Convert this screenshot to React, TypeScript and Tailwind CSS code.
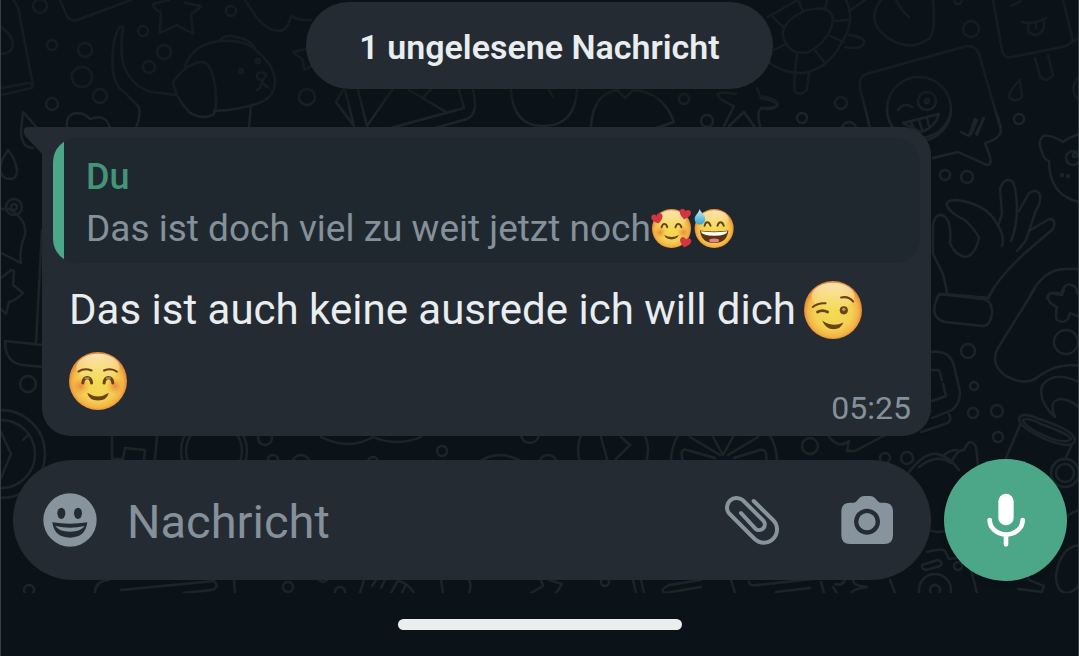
import type { ReactNode } from 'react';

// x, y, radius of the small bubbles in the wallpaper
const bubbles = [
  [39, 6, 7], [51, 45, 5], [84, 50, 7], [81, 77, 10], [99, 96, 7], [51, 104, 6],
  [142, 31, 5], [163, 52, 7], [148, 67, 6], [230, 11, 5], [306, 97, 8], [240, 71, 2],
  [257, 61, 2], [970, 29, 8], [957, 0, 4], [918, 109, 32], [926, 101, 9], [926, 101, 2],
  [1018, 119, 5], [840, 103, 6], [801, 118, 5], [848, 129, 7], [944, 175, 5], [966, 177, 6],
  [1072, 158, 7], [1074, 155, 2], [1061, 175, 1], [1067, 176, 1],
  [1065, 342, 12], [967, 351, 7], [973, 386, 4], [972, 413, 5], [996, 411, 6], [997, 437, 5],
  [13, 207, 8], [13, 207, 3], [27, 384, 8], [0, 454, 44], [0, 454, 34], [213, 451, 33],
  [213, 451, 28], [264, 438, 7], [272, 460, 5], [300, 464, 9], [372, 462, 5], [441, 451, 5],
  [529, 434, 9], [547, 464, 9], [612, 450, 35], [723, 462, 53], [809, 446, 8], [884, 458, 5],
  [906, 458, 6], [28, 590, 5], [287, 587, 5], [339, 592, 5], [604, 582, 4], [934, 590, 16],
  [934, 590, 5], [957, 566, 4], [1064, 473, 9], [1064, 473, 14], [683, 99, 5], [706, 121, 6],
];

const doodles = [
  // book, envelope and star
  'M12 0Q18 6 19 18L32 85M0 88L28 83q4 0 3 5L0 95M0 27q12 8 12 18q-2 9-12 9',
  'M59 0L66 16Q70 22 76 20L130 0',
  'M168 0l-16 4q-1 3 8 9l-1 20l17-8l16 9l-2-20q12-8 10-8l-16-3',
  // dog
  'M122 27q-5-3-9 15q-6 40 10 50l15 15q2 8-3 21M122 27q-4 30 3 44q12 22 35 22l14 2',
  'M184 66q8-22 35-25q25-2 37 10q18 16 18 30q0 16-16 22q-20 7-45 8',
  'M202 62q-16 0-30 20q2 15 16 30q12 8 24 3q5-5 2-30q-4-22-12-23',
  'M220 39q6-5 14-2q16 2 20 12M256 74q5-3 9 0q0 4-4 6q-6 0-5-6m5 6q2 6 6 7m-6-4q-2 6-5 7M250 106l-2 21',
  'M244 0l12 18q14 16 26 12q5-2 8-14q8 5 20 4M310 48l-18 4l10 8l1 10l8-4',
  'M20 130l2-18l16 18M66 128q-2-14 10-15q8 0 13 6q16-6 20 9',
  // turtle
  'M783 40q-6-16 20-29q26-8 29 8q-2 20-24 33q-18 4-25-12M767 17L800-2M845 0q10 20-4 42q-14 28-40 31q-20 0-32-10',
  'M848 35q16 2 15 8q-2 7-19 4M796 55q-4 30-2 37q8 4 12-3l2-16M848 11l16-11',
  'M772 17l10 10M797 0l5 11M826 0l-2 10M833 21l15-1M829 36l14 6M814 50l9 12M773 50l10-5',
  'M880 0q-14 18 1 33q25 22 48 5q6-8 3-38M895 0q6 12 13 17',
  // tilted phone with face
  'M869 128L859 88q-2-10 6-14L966 46q9 0 12 8L1000 130M902 123l36-9q-4 14-18 18zM897 110q6-8 14-3M910 122l4 8M918 120l3 10M926 118l2 8',
  'M976 120l-6 14M983 118l-8 16M760 98q18 4 16 8q-6 5-16 2',
  // ice lolly
  'M992 0l9 50q2 9 10 7l50-10q12-3 10-10L1062 0M1071 42l8-5M1021 22q12 3 24-4m-10 4v6m-7-5q-4 12 8 12q8-3 7-13M1010 6l10-5',
  'M1034 58l5 18q6 8 13-1l-5-20M1019 80q-14 14-10 18q6 5 12-1zM1076 78q-8 14 2 22',
  'M932 158l25-6l29 13q5 0 3-8l-5-14q16-4 16-14l-3-12M960 132l8 4l6-17m8 0l-6 16M920 138q20-2 28-20',
  // plant
  'M946 206q-2-6 10-6q30 4 40 24q8 12 5 22M946 206q4 8 18 14q12 12 14 18q-4 18-14 19q-10-2-15-14q2-22-6-27q-8-4-11 8v30l10 20l4 18',
  'M997 226l4-12l-2-25q4-12 12-8q4 4 5 26q0 20-6 34M1018 211l10-18q8-5 11 2q1 8-4 15q-6 18-10 30q-6 8-9 11',
  'M1028 231l20-12q8 0 4 10l-28 24q-26 24-36 43M936 300q0-6 6-6l46 4',
  // bear and game pad
  'M1062 142q-12-8-20-6q-6 6-1 16q2 8 7 9q0 34 30 41M1062 142q8-6 17-8',
  'M1028 298q14-30 38-29h12M1046 298q2-8 14-4q4-12 10-9q6 1 6 8',
  'M938 294l44 5q10 2 9 15q-2 12-9 12l-38-4q-16-4-8-24M987 298l5-8M1033 290l-36 58q-8 14 5 26q22 14 36 2q20-14 41-10',
  'M1063 290l-2 5l-12-2q-6 8 7 14q-2 10 0 13q10 6 13-7l10 4M1079 382q-28-12-38 4q-4 16 13 31q-6-14 2-17q8-4 23 8',
  // cup
  'M1018 419q2-8 20 0q32 10 36 20q0 12-30 0q-26-12-26-20M1022 420q6-3 18 4q28 10 30 15q-6 6-28-4q-18-8-20-15M1019 425l-14 33M1070 447l-6 12',
  'M931 352q18-2 22 14l6 26q0 12-8 18l-20 8M948 414q4 8-4 10l-24 8M931 370h5m2 0l3 10m1 4l3 12l-14 5M918 467q18-14 32-4q6-14 13-13M963 450q6-14 12-3l2 18',
  // left edge
  'M7 150q-14 20-3 28q12 4 12-8q-2-12-9-20M0 209h8q18 10 16 26q-6 14-4 28l-20-10M0 278l10-8l3 1l-1 14l10 8q-8 8-14 9l-3 12l-6-6',
  'M41 230l-6 114M20 130q0 18 12 18M42 345l-38-4q0 22 18 24l20 2M0 432l10 22l-10 24M22 440l6-6',
  // between bubble and text box
  'M111 437v22h11l2-11l20 2l-1 10M156 437l-2 22M320 437q28 14 52 0q24 10 48 0M478 462q20-14 44 0M600 437l6 22M620 437l9 8l-14 14',
  'M682 462q-4-15 4-12l28 8M765 462q2-14-6-12l-26 8M689 437l30 18M757 437l-30 18M712 437l10 18l10-18M828 437q10 12 20 4l-2 10l8 0l76-40',
  'M908 472q16-20 28-18q12 2 22 16M942 456q6-6 14-6M928 530q10 4 18 0M1079 510q-12 2-18 14',
  // below the text box
  'M94 593q0-12 14-13M120 590l93-9q6 6-2 9l-28 3M233 580l1 13M318 580q4 4 8 0',
  'M363 580l-4 13M375 580l-4 6M384 580l-4 8M397 580l-7 13M397 581q10 2 16 12M405 584l-4 9M440 580l2 13M468 580q3 6 0 13M540 580l2 6l-12 7M548 580l13 4l-6 9',
  'M632 580l3 13M640 580l3 13M700 580l-32 5q-10 5-4 8l36-6',
  'M730 580l4 13M748 582q0 4 8 3l56-6M775 592l34-4M820 582l3 11M834 584q8 2 10-4m8 0q0 6 14 7q-14 2-16 6m-14 0l-4-6',
  'M889 580l5 13M921 565l16-5q6 3 2 6l-14 4q-5-1-4-5M926 552q16-4 18-1l4 8l14-2M970 570l6 23M1079 545q-20 2-24 30q0 18 12 18q12-4 12-14M1024 570l4 10l15 6l-2 6l-24-3',
  // under the unread label
  'M342 90l-7 12l18 24M344 90l9 36M357 90l9 36l25-36M408 90l37 22M458 90l5 18l-73 20M472 90q6 24-6 29l-32 9M422 98l8-9',
  'M510 90q2 36 32 36q32 0 34-36M548 90l4 7M590 126q2-32 26-36l8 8l8-8q30 2 41 32l-18 6',
  'M723 126q8-16 10-20q-18-8-16-12q4-3 18 0M728 126l15-14l10 14M759 126q-4-16 2-18q16 0 16-4q-2-6-18-8l-3-8',
];

function Wallpaper() {
  return (
    <svg
      className="absolute inset-0 h-full w-full"
      viewBox="0 0 1079 593"
      preserveAspectRatio="xMinYMin slice"
      fill="none"
      stroke="url(#doodle)"
      strokeWidth="2.4"
      strokeLinecap="round"
      strokeLinejoin="round"
      aria-hidden="true"
    >
      <defs>
        <linearGradient id="doodle" gradientUnits="userSpaceOnUse" x1="0" y1="95" x2="0" y2="115">
          <stop offset="0" stopColor="#151d20" />
          <stop offset="1" stopColor="#1b2527" />
        </linearGradient>
      </defs>
      {doodles.map((d) => (
        <path key={d} d={d} />
      ))}
      {bubbles.map(([x, y, r], i) => (
        <circle key={i} cx={x} cy={y} r={r} />
      ))}
    </svg>
  );
}

type EmojiProps = {
  className: string;
  viewBox: string;
  cx: number;
  cy: number;
  r: number;
  children: ReactNode;
};

function Emoji({ className, viewBox, cx, cy, r, children }: EmojiProps) {
  return (
    <svg className={className} viewBox={viewBox} fill="none" stroke="#6b4312" strokeLinecap="round" aria-hidden="true">
      <circle cx={cx} cy={cy} r={r} fill="url(#face)" stroke="none" />
      <ellipse cx={cx} cy={cy - r * 0.48} rx={r * 0.74} ry={r * 0.46} fill="url(#shine)" stroke="none" />
      {children}
    </svg>
  );
}

function EmojiDefs() {
  return (
    <svg className="absolute h-0 w-0" aria-hidden="true">
      <defs>
        <radialGradient id="face" cx="0.5" cy="0.52" r="0.5">
          <stop offset="0" stopColor="#f3dc52" />
          <stop offset="0.65" stopColor="#f4d055" />
          <stop offset="0.87" stopColor="#f3b546" />
          <stop offset="1" stopColor="#e58a35" />
        </radialGradient>
        <linearGradient id="shine" x1="0" y1="0" x2="0" y2="1">
          <stop offset="0" stopColor="#fdf0cb" stopOpacity="0.85" />
          <stop offset="1" stopColor="#fae48c" stopOpacity="0.2" />
        </linearGradient>
        <radialGradient id="cheek">
          <stop offset="0" stopColor="#ec7a35" stopOpacity="0.85" />
          <stop offset="1" stopColor="#ef9a3b" stopOpacity="0" />
        </radialGradient>
        <linearGradient id="drop" x1="0" y1="0" x2="0" y2="1">
          <stop offset="0" stopColor="#c5ecf5" />
          <stop offset="1" stopColor="#3aa5cf" />
        </linearGradient>
      </defs>
    </svg>
  );
}

const heart = 'M0 16C-10 10-18 2-17-6C-16-15-5-17 0-8C5-17 16-15 17-6C18 2 10 10 0 16Z';

function HeartsFace() {
  return (
    <Emoji className="h-[41px] w-[41px] overflow-visible" viewBox="46 52 124 124" cx={108} cy={114} r={59}>
      <circle cx="73" cy="126" r="19" fill="url(#cheek)" stroke="none" />
      <circle cx="144" cy="126" r="19" fill="url(#cheek)" stroke="none" />
      <path d="M78 110Q81 100 86 100Q93 100 95 110M120 110Q123 100 128 100Q135 100 138 110" strokeWidth="6" />
      <path d="M86 134Q108 146 130 134Q125 147 108 147Q91 147 86 134Z" fill="#6b4312" stroke="none" />
      <g fill="#d3343f" stroke="none">
        <path d={heart} transform="translate(65 83) rotate(-15)" />
        <path d={heart} transform="translate(149 70) rotate(12)" />
        <path d={heart} transform="translate(150 155) rotate(12)" />
      </g>
    </Emoji>
  );
}

function SweatFace() {
  return (
    <Emoji className="h-[41px] w-[41px] overflow-visible" viewBox="176 52 124 124" cx={237} cy={114} r={59}>
      <path d="M208 106Q210 95 216 95Q223 95 226 106M247 106Q250 95 256 95Q263 95 266 106" strokeWidth="6" />
      <path d="M194 120Q237 126 280 120Q276 158 237 158Q198 158 194 120Z" fill="#5c3510" stroke="none" />
      <path d="M197 122Q237 128 277 122Q276 135 237 136Q198 135 197 122Z" fill="#fff" stroke="none" />
      <ellipse cx="237" cy="150" rx="15" ry="6" fill="#e88385" stroke="none" />
      <path d="M193 55C198 67 210 74 210 86a16 16 0 0 1-32 0C178 74 190 67 193 55Z" fill="url(#drop)" stroke="none" />
    </Emoji>
  );
}

function WinkFace() {
  return (
    <Emoji className="h-[58px] w-[58px]" viewBox="515 275 172 172" cx={601} cy={361} r={86}>
      <path d="M541 352Q557 339 579 341M625 324Q647 319 661 336" strokeWidth="6" />
      <path d="M555 367Q569 359 585 367" strokeWidth="8" />
      <circle cx="633" cy="362" r="12" fill="#6b4312" stroke="none" />
      <circle cx="633" cy="359" r="5" fill="#b09a83" stroke="none" />
      <path d="M569 392Q600 414 632 398Q624 418 603 418Q579 418 569 392Z" fill="#6b4312" stroke="none" />
    </Emoji>
  );
}

function BlushFace() {
  return (
    <Emoji className="h-[58px] w-[58px]" viewBox="209 187 172 172" cx={295} cy={273} r={86}>
      <circle cx="243" cy="288" r="27" fill="url(#cheek)" stroke="none" />
      <circle cx="346" cy="288" r="27" fill="url(#cheek)" stroke="none" />
      <path d="M237 245Q255 233 276 242M313 242Q334 233 351 245" strokeWidth="6" />
      <path d="M250 279Q252 263 263 263Q274 263 276 279M313 279Q315 263 326 263Q337 263 339 279" strokeWidth="9" />
      <path d="M258 265h9M321 265h9" stroke="#a08d78" strokeWidth="6" />
      <path d="M263 308Q295 330 327 308Q322 331 295 331Q268 331 263 308Z" fill="#6b4312" stroke="none" />
    </Emoji>
  );
}

function SmileyIcon() {
  return (
    <svg className="h-[54px] w-[54px]" viewBox="69 67 162 162" aria-hidden="true">
      <circle cx="150" cy="148" r="80" fill="#87949d" />
      <g fill="#242b32">
        <ellipse cx="124" cy="128" rx="12" ry="17" />
        <ellipse cx="174" cy="128" rx="12" ry="17" />
        <path d="M97 155Q150 163 202 155Q196 201 150 201Q103 201 97 155Z" />
      </g>
      <path d="M106 166Q150 176 194 166Q183 183 150 183Q117 183 106 166Z" fill="#87949d" />
    </svg>
  );
}

function ClipIcon() {
  return (
    <svg className="h-[52px] w-[57px]" viewBox="68 130 171 156" fill="none" stroke="#87949d" strokeWidth="12" strokeLinecap="round" aria-hidden="true">
      <path d="M160 151L218 208A39 39 0 0 1 163 265L85 187A29 29 0 0 1 127 148L189 210A17 17 0 0 1 165 234L122 187" />
    </svg>
  );
}

function CameraIcon() {
  return (
    <svg className="h-[50px] w-[54px]" viewBox="420 130 162 150" fill="#87949d" aria-hidden="true">
      <path
        fillRule="evenodd"
        d="M468 150L478 139Q484 133 493 133H510Q519 133 525 139L535 150Q538 153 543 153H553Q579 153 579 180V251Q579 277 553 277H450Q424 277 424 251V180Q424 153 450 153H460Q465 153 468 150ZM501 171a39 39 0 1 0 0.1 0Z"
      />
      <circle cx="501" cy="210" r="26" />
    </svg>
  );
}

function MicIcon() {
  return (
    <svg className="h-[54px] w-[40px]" viewBox="856 127 120 162" fill="none" stroke="#fff" strokeLinecap="round" aria-hidden="true">
      <rect x="893" y="129" width="46" height="95" rx="23" fill="#fff" stroke="none" />
      <path d="M867 208A49 43 0 0 0 966 208M916 252V281" strokeWidth="14" />
    </svg>
  );
}

export default function App() {
  return (
    <div className="flex min-h-screen flex-col border-x border-[#384246] bg-[#0b1318] font-['Roboto',sans-serif]">
      <EmojiDefs />
      <main className="relative flex flex-col pt-[2px] pb-3">
        <Wallpaper />

        {/* Unread label */}
        <div className="relative self-center rounded-full bg-[#242b33] px-[53px] pt-6 pb-5 text-[34px] leading-[43px] font-semibold text-[#e9edef]">
          1 ungelesene Nachricht
        </div>

        {/* Incoming message */}
        <article className="relative mt-[38px] mr-[147px] ml-[41px] rounded-[28px] rounded-tl-none bg-[#242b33] px-[11px] pt-[11px] pb-5">
          <svg className="absolute top-0 -left-[19px] h-7 w-5" viewBox="0 0 20 28" fill="#242b33" aria-hidden="true">
            <path d="M5 0H20V28L2 9Q-2 1 5 0Z" />
          </svg>

          <blockquote className="flex overflow-hidden rounded-3xl bg-[#20282f]">
            <div className="w-[11px] bg-[#4ca688]" />
            <div className="px-[22px] pt-[14px] pb-[9px] leading-[51px]">
              <p className="text-[36px] font-medium text-[#439579]">Du</p>
              <p className="flex items-center text-[37px] text-[#84919a]">
                Das ist doch viel zu weit jetzt noch
                <span className="flex gap-[2px]">
                  <HeartsFace />
                  <SweatFace />
                </span>
              </p>
            </div>
          </blockquote>

          <div className="pt-[11px] pl-4 text-[42px] leading-[71px] text-[#e9edef]">
            <p className="flex items-center gap-2">
              Das ist auch keine ausrede ich will dich
              <WinkFace />
            </p>
            <p className="flex h-[71px] items-center">
              <BlushFace />
            </p>
          </div>
          <time className="absolute right-5 bottom-2 text-[32px] leading-10 text-[#84919a]">05:25</time>
        </article>

        {/* Composer */}
        <form className="relative mt-[23px] flex items-center gap-[13px] pr-[11px] pl-3" onSubmit={(e) => e.preventDefault()}>
          <div className="flex h-[120px] min-w-0 flex-1 items-center rounded-full bg-[#242b33] pr-[37px] pl-[30px]">
            <button type="button" aria-label="Emoji">
              <SmileyIcon />
            </button>
            <input
              type="text"
              aria-label="Nachricht"
              placeholder="Nachricht"
              className="mx-[30px] min-w-0 flex-1 bg-transparent pt-1 text-[47px] text-[#e9edef] outline-none placeholder:text-[#84919a]"
            />
            <button type="button" aria-label="Anhang" className="mr-[60px]">
              <ClipIcon />
            </button>
            <button type="button" aria-label="Kamera">
              <CameraIcon />
            </button>
          </div>
          <button
            type="button"
            aria-label="Sprachnachricht"
            className="flex h-[122px] w-[123px] shrink-0 items-center justify-center rounded-full bg-[#4ca688] shadow-md"
          >
            <MicIcon />
          </button>
        </form>
      </main>

      {/* Gesture bar */}
      <footer className="flex justify-center py-[26px]">
        <div className="h-[11px] w-[284px] rounded-full bg-[#eceeee]" />
      </footer>
    </div>
  );
}
